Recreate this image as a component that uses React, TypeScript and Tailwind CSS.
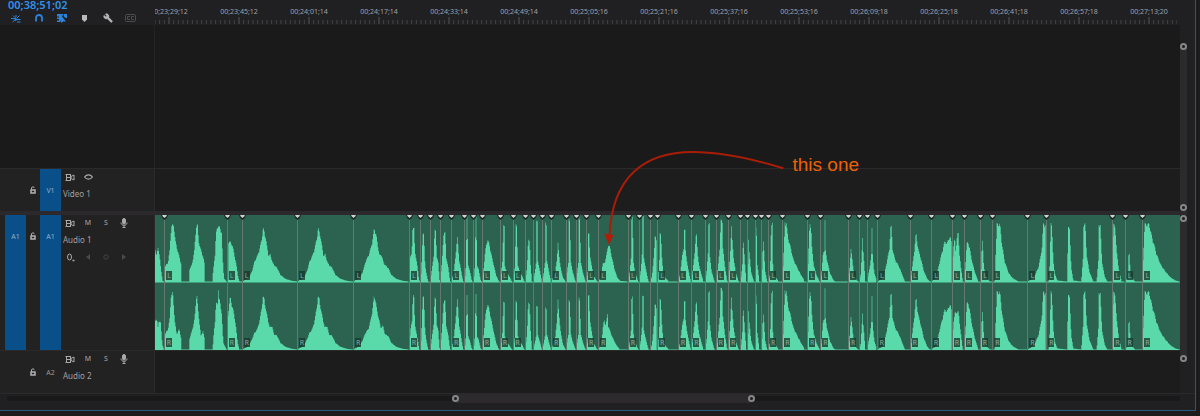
import type { ReactNode } from 'react';
import { Wrench } from 'lucide-react';

type Clip = {
    width: number;
    label?: boolean;
    left: number[];
    // either its own envelope, or the peak height the left one is scaled to
    right?: number | number[];
};

const CHANNEL_HEIGHT = 202;
const BASELINE = 199;

const SWELL_L = [0, 0, 20, 10, 30, 30, 38, 60, 46, 75, 54, 100, 60, 130, 64, 158, 70, 135, 74, 110, 80, 75, 85, 80, 92, 55, 100, 45, 106, 40, 115, 20, 130, 8, 150, 2, 166, 0];
const SWELL_R = [0, 0, 20, 10, 30, 30, 38, 50, 46, 60, 54, 90, 60, 130, 63, 153, 67, 150, 72, 115, 78, 90, 83, 65, 90, 70, 96, 45, 106, 40, 115, 20, 130, 8, 150, 2, 166, 0];
const SPIKE = [0, 0, 4, 20, 6, 60, 8, 195, 10, 195, 12, 50, 17, 35, 23, 5, 26, 0];
const PLUCK = [0, 0, 5, 25, 10, 60, 11, 175, 14, 175, 15, 60, 22, 25, 27, 0];

// envelopes are flat lists of x, height pairs
const CLIPS: Clip[] = [
    { width: 27, left: [0, 95, 5, 80, 9, 97, 13, 85, 18, 35, 23, 2, 27, 0], right: [0, 85, 6, 90, 9, 65, 12, 88, 17, 78, 22, 15, 27, 0] },
    {
        width: 188,
        label: true,
        left: [0, 0, 3, 45, 12, 55, 17, 90, 22, 165, 30, 165, 34, 120, 40, 95, 48, 65, 52, 50, 53, 0, 75, 0, 76, 35, 84, 50, 91, 90, 97, 165, 101, 165, 104, 120, 110, 95, 117, 75, 122, 50, 123, 0, 146, 0, 147, 25, 153, 80, 156, 140, 163, 168, 170, 150, 173, 148, 176, 70, 180, 10, 188, 0],
        right: [0, 0, 3, 45, 12, 60, 17, 90, 21, 160, 26, 168, 30, 120, 33, 80, 38, 45, 46, 60, 51, 35, 52, 0, 75, 0, 76, 30, 84, 55, 92, 90, 98, 170, 102, 120, 107, 75, 111, 40, 117, 55, 121, 35, 122, 0, 146, 0, 148, 30, 153, 85, 156, 135, 161, 135, 163, 182, 165, 150, 168, 140, 173, 110, 178, 20, 188, 0],
    },
    { width: 45, label: true, left: [0, 0, 3, 5, 4, 120, 10, 115, 16, 108, 22, 80, 28, 50, 34, 10, 38, 0], right: [0, 0, 3, 100, 6, 130, 10, 155, 14, 135, 20, 110, 26, 75, 32, 20, 37, 0] },
    { width: 166, label: true, left: SWELL_L, right: SWELL_R },
    { width: 169, label: true, left: SWELL_L, right: SWELL_R },
    { width: 167, label: true, left: SWELL_L, right: SWELL_R },
    { width: 34, label: true, left: [0, 0, 3, 70, 8, 80, 11, 158, 15, 155, 18, 90, 22, 65, 26, 40, 30, 5, 34, 0], right: [0, 0, 4, 55, 9, 85, 12, 165, 15, 150, 18, 75, 24, 40, 30, 5] },
    { width: 29, left: [0, 0, 4, 30, 8, 140, 12, 138, 14, 70, 18, 30, 24, 3], right: 155 },
    { width: 31, left: [0, 0, 5, 30, 11, 75, 14, 150, 18, 148, 20, 75, 25, 55, 29, 5] },
    { width: 33, left: [0, 0, 6, 60, 12, 150, 16, 148, 18, 70, 24, 50, 30, 3] },
    { width: 39, label: true, left: [0, 0, 8, 25, 13, 70, 17, 110, 19, 128, 22, 100, 25, 60, 30, 35, 36, 3], right: 145 },
    { width: 26, left: SPIKE, right: 160 },
    { width: 27, left: SPIKE, right: 160 },
    { width: 54, label: true, left: [0, 0, 5, 40, 10, 90, 16, 125, 22, 110, 28, 80, 35, 50, 42, 20, 50, 2], right: 135 },
    { width: 38, label: true, left: [0, 0, 4, 30, 8, 70, 10, 165, 13, 160, 15, 45, 20, 30, 28, 15, 36, 0], right: 140 },
    { width: 36, label: true, left: [0, 0, 5, 40, 9, 165, 12, 160, 14, 50, 20, 30, 28, 15, 34, 0], right: 140 },
    { width: 24, left: [0, 0, 6, 40, 10, 125, 14, 125, 16, 60, 20, 10], right: 140 },
    { width: 29, left: PLUCK, right: 125 },
    { width: 27, left: PLUCK, right: 125 },
    { width: 44, label: true, left: [0, 0, 12, 20, 18, 70, 21, 112, 24, 80, 30, 35, 36, 12, 44, 0], right: 145 },
    { width: 31, left: [0, 0, 4, 35, 8, 60, 9, 190, 12, 180, 14, 60, 20, 30, 28, 2], right: 150 },
    { width: 30, left: [0, 0, 4, 35, 8, 60, 9, 190, 12, 180, 14, 60, 20, 30, 28, 2], right: 150 },
    { width: 36, label: true, left: [0, 0, 5, 30, 7, 140, 9, 138, 12, 80, 18, 40, 24, 15, 34, 0], right: 158 },
    {
        width: 89,
        label: true,
        left: [0, 0, 8, 10, 14, 52, 20, 55, 26, 80, 31, 110, 36, 100, 42, 70, 50, 35, 58, 12, 66, 2, 89, 0],
        right: [0, 0, 10, 15, 16, 75, 20, 88, 22, 70, 26, 85, 29, 105, 31, 70, 36, 55, 44, 35, 54, 15, 64, 2],
    },
    { width: 34, label: true, left: [0, 0, 5, 25, 10, 80, 11, 190, 14, 190, 16, 60, 22, 25, 30, 3], right: 155 },
    { width: 32, left: [0, 0, 5, 30, 9, 80, 10, 190, 13, 190, 15, 70, 20, 40, 28, 3], right: 155 },
    { width: 22, left: [0, 0, 6, 15, 12, 80, 15, 130, 18, 135, 20, 120, 21, 0] },
    { width: 62, label: true, left: [0, 0, 4, 10, 8, 80, 9, 148, 12, 140, 14, 80, 18, 35, 24, 12, 34, 2], right: 155 },
    { width: 41, label: true, left: [0, 0, 6, 20, 12, 70, 17, 100, 18, 155, 21, 150, 23, 90, 30, 40, 38, 3], right: 145 },
    { width: 42, label: true, left: [0, 0, 6, 40, 12, 90, 14, 138, 17, 138, 20, 80, 26, 40, 36, 5] },
    { width: 31, left: [0, 0, 5, 30, 9, 85, 10, 175, 13, 170, 15, 70, 20, 30, 28, 2] },
    { width: 37, label: true, left: [0, 0, 6, 40, 12, 110, 14, 178, 19, 178, 21, 100, 26, 50, 33, 5] },
    { width: 35, label: true, left: [0, 0, 4, 40, 9, 130, 11, 160, 13, 120, 18, 60, 24, 25, 32, 0], right: 150 },
    { width: 21, left: [0, 0, 4, 20, 8, 60, 10, 135, 12, 100, 15, 50, 19, 0] },
    { width: 26, left: [0, 0, 3, 50, 5, 125, 7, 90, 12, 30, 20, 3], right: 115 },
    { width: 17, left: [0, 0, 2, 60, 3, 158, 5, 140, 7, 50, 12, 10] },
    { width: 21, left: [0, 0, 4, 50, 6, 128, 9, 90, 13, 30, 18, 2], right: 112 },
    { width: 43, label: true, left: [0, 0, 6, 20, 10, 175, 13, 175, 15, 50, 18, 20, 30, 3] },
    { width: 74, label: true, left: [0, 0, 4, 60, 9, 175, 13, 172, 18, 130, 26, 100, 34, 65, 44, 45, 54, 25, 66, 5] },
    { width: 40, label: true, left: [0, 0, 4, 70, 8, 172, 12, 165, 15, 100, 20, 50, 28, 20, 38, 0] },
    { width: 83, label: true, left: [0, 0, 5, 30, 10, 90, 13, 90, 14, 178, 16, 178, 17, 90, 22, 60, 30, 25, 40, 5, 46, 0] },
    { width: 34, label: true, left: [0, 0, 5, 40, 9, 98, 11, 85, 15, 45, 20, 12, 30, 0] },
    { width: 24, left: [0, 0, 5, 20, 9, 90, 11, 130, 13, 90, 18, 15], right: 108 },
    { width: 28, left: [0, 0, 8, 40, 13, 80, 15, 155, 17, 80, 22, 25, 27, 10] },
    { width: 99, label: true, left: [0, 0, 16, 8, 24, 30, 32, 70, 38, 100, 40, 160, 44, 160, 46, 100, 54, 65, 66, 45, 76, 20, 84, 0] },
    { width: 64, label: true, left: [0, 0, 8, 50, 14, 100, 18, 145, 21, 120, 26, 90, 32, 70, 42, 30, 52, 8, 60, 0], right: 155 },
    { width: 63, label: true, left: [0, 0, 16, 10, 24, 50, 34, 90, 42, 120, 48, 110, 52, 125, 58, 130, 62, 115, 63, 0] },
    {
        width: 36,
        label: true,
        left: [0, 0, 4, 100, 8, 130, 11, 90, 16, 140, 19, 140, 22, 90, 27, 40, 32, 3],
        right: [0, 0, 4, 80, 10, 110, 20, 110, 25, 60, 32, 3],
    },
    { width: 48, label: true, left: [0, 0, 5, 60, 8, 110, 12, 115, 16, 105, 22, 70, 32, 30, 42, 3], right: 138 },
    { width: 37, label: true, left: [0, 0, 4, 50, 6, 125, 8, 110, 12, 40, 20, 10, 30, 0], right: 115 },
    { width: 105, label: true, left: [0, 0, 8, 0, 10, 60, 15, 168, 24, 168, 30, 110, 38, 60, 50, 25, 62, 10, 80, 0] },
    { width: 57, label: true, left: [0, 0, 12, 5, 24, 20, 34, 40, 42, 80, 46, 110, 48, 168, 56, 168, 57, 0] },
    {
        width: 198,
        label: true,
        left: [0, 0, 8, 0, 12, 60, 14, 170, 18, 165, 22, 60, 26, 25, 34, 3, 64, 0, 66, 170, 71, 150, 76, 40, 82, 3, 106, 0, 112, 80, 113, 170, 118, 168, 122, 80, 130, 30, 142, 0, 152, 0, 157, 60, 159, 170, 163, 165, 168, 60, 176, 15, 184, 0],
    },
    { width: 37, label: true, left: [0, 0, 2, 100, 4, 168, 10, 160, 14, 90, 20, 40, 28, 3] },
    { width: 53, label: true, left: [0, 0, 8, 10, 12, 100, 14, 60, 18, 15, 30, 0] },
    { width: 113, label: true, left: [0, 0, 8, 168, 22, 168, 30, 130, 36, 110, 44, 80, 56, 50, 70, 30, 86, 12, 100, 3, 113, 0] },
];

const TIMES = [
    '00;23;29;12', '00;23;45;12', '00;24;01;14', '00;24;17;14', '00;24;33;14',
    '00;24;49;14', '00;25;05;16', '00;25;21;16', '00;25;37;16', '00;25;53;16',
    '00;26;09;18', '00;26;25;18', '00;26;41;18', '00;26;57;18', '00;27;13;20',
];

const heightAt = (points: number[], x: number) => {
    for (let i = 2; i < points.length; i += 2) {
        if (x <= points[i]) {
            const x0 = points[i - 2];
            const t = (x - x0) / (points[i] - x0);
            return points[i - 1] + t * (points[i + 1] - points[i - 1]);
        }
    }
    return 0;
};

const wavePath = (points: number[], width: number, scale: number) => {
    let d = `M0 ${CHANNEL_HEIGHT}`;
    for (let x = 0; x < width; x += 2) {
        const noise = Math.abs(Math.sin(x * 12.9 + width * 7.3));
        const h = heightAt(points, x + 1) * scale * (0.96 + noise * 0.08);
        d += `V${(BASELINE - h).toFixed(1)}H${Math.min(x + 2, width)}`;
    }
    return `${d}V${CHANNEL_HEIGHT}Z`;
};

function Channel({ clip, side }: { clip: Clip; side: 'L' | 'R' }) {
    let points = clip.left;
    let scale = 1;
    if (side === 'R' && Array.isArray(clip.right)) {
        points = clip.right;
    } else if (side === 'R' && clip.right) {
        scale = (clip.right as number) / Math.max(...clip.left.filter((_, i) => i % 2 === 1));
    }
    return (
        <div className="relative min-h-0 flex-1">
            <svg
                className="block h-full w-full"
                viewBox={`0 0 ${clip.width} ${CHANNEL_HEIGHT}`}
                preserveAspectRatio="none"
            >
                <path d={wavePath(points, clip.width, scale)} fill="#5ad9aa" />
            </svg>
            {clip.label && (
                <span className="absolute bottom-[3px] left-[2px] flex h-[9px] w-[6px] items-center justify-center bg-[#17392d]/80 text-[7px] leading-none text-[#93a89e]">
                    {side}
                </span>
            )}
        </div>
    );
}

function ClipView({ clip, first }: { clip: Clip; first: boolean }) {
    return (
        <div className="relative flex min-w-0 basis-0 flex-col" style={{ flexGrow: clip.width }}>
            <Channel clip={clip} side="L" />
            <Channel clip={clip} side="R" />
            {!first && (
                <>
                    <div className="absolute inset-y-0 left-0 w-px bg-[#63786e]" />
                    <svg className="absolute top-0 -left-[3px] h-[5px] w-[7px]" viewBox="0 0 7 5">
                        <path d="M0 0H7L6 3L3.500 5L1 3Z" fill="#1c2a25" />
                        <path d="M1.300 0H5.700V1L3.500 3L1.300 1Z" fill="#cfd3d0" />
                    </svg>
                </>
            )}
        </div>
    );
}

function IconButton({ label, children }: { label: string; children: ReactNode }) {
    return (
        <button aria-label={label} className="flex h-4 w-[18px] items-center justify-center text-[7px] text-[#a9a9a9]">
            {children}
        </button>
    );
}

function SyncIcon() {
    return (
        <svg width="10" height="9" viewBox="0 0 10 9" fill="none" stroke="currentColor">
            <path d="M.5 1.500H6M1.500 4.500H6M.5 7.500H6M1.500 1.500V7.500" />
            <path d="M5.500 1.500V7.500M6 3.500 9 2V7L6 5.500Z" />
        </svg>
    );
}

function EyeIcon() {
    return (
        <svg width="9" height="6" viewBox="0 0 9 6" fill="none" stroke="currentColor">
            <path d="M.6 3C2.500.2 6.500.2 8.400 3C6.500 5.800 2.500 5.800.6 3Z" strokeWidth="1.200" />
            <circle cx="4.500" cy="3" r=".7" fill="#222223" stroke="none" />
        </svg>
    );
}

function MicIcon() {
    return (
        <svg width="8" height="10" viewBox="0 0 8 10" fill="none" stroke="currentColor">
            <rect x="2.500" y=".5" width="3" height="5.500" rx="1.500" fill="currentColor" />
            <path d="M1 4.500C1 8.300 7 8.300 7 4.500M4 7.500V9.500M2.500 9.500H5.500" />
        </svg>
    );
}

function LockIcon() {
    return (
        <svg width="6" height="8" viewBox="0 0 6 8" fill="none" stroke="#b3b3b3">
            <path d="M1.500 3.500V1.800C1.500.6 4.300.6 4.300 1.800" />
            <path d="M1 4H5V7H1Z" strokeWidth="1.500" />
        </svg>
    );
}

function PatchButton({ name, on }: { name?: string; on?: boolean }) {
    return (
        <button
            aria-label={name ? undefined : 'Source patch'}
            className={`flex w-[21px] justify-center pt-4 text-[7px] leading-[12px] ${on ? 'bg-[#09508a] text-[#93aec6]' : 'text-[#9a9a9a]'}`}
        >
            {name}
        </button>
    );
}

type TrackHeaderProps = {
    id: string;
    name: string;
    source?: string;
    targeted?: boolean;
    audio?: boolean;
    keyframes?: boolean;
};

function TrackHeader({ id, name, source, targeted, audio, keyframes }: TrackHeaderProps) {
    return (
        <div className="flex w-[155px] shrink-0 border-r border-[#2b2b2c] bg-[#222223] pl-[5px]">
            <PatchButton name={source} on={!!source} />
            <button aria-label={`Lock ${name}`} className="flex w-[14px] justify-center pt-[17px]">
                <LockIcon />
            </button>
            <PatchButton name={id} on={targeted} />
            <div>
                <div className="flex">
                    <IconButton label="Toggle sync lock">
                        <SyncIcon />
                    </IconButton>
                    {audio ? (
                        <>
                            <IconButton label="Mute">M</IconButton>
                            <IconButton label="Solo">S</IconButton>
                            <IconButton label="Record">
                                <MicIcon />
                            </IconButton>
                        </>
                    ) : (
                        <IconButton label="Toggle track output">
                            <EyeIcon />
                        </IconButton>
                    )}
                </div>
                <div className="pl-[2px] text-[8px] leading-[18px] text-[#a0a0a0]">{name}</div>
                {keyframes && (
                    <div className="flex">
                        <IconButton label="Show keyframes">
                            <svg width="9" height="9" viewBox="0 0 9 9" fill="none" stroke="currentColor">
                                <ellipse cx="3.500" cy="4" rx="2" ry="3" />
                                <path d="M6.500 7.500H8.500" strokeWidth="1.500" />
                            </svg>
                        </IconButton>
                        <IconButton label="Previous keyframe">
                            <svg width="4" height="6" viewBox="0 0 4 6"><path d="M4 0V6L0 3Z" fill="#4a4a4a" /></svg>
                        </IconButton>
                        <IconButton label="Add keyframe">
                            <svg width="6" height="6" viewBox="0 0 6 6"><circle cx="3" cy="3" r="2.200" fill="none" stroke="#444" /></svg>
                        </IconButton>
                        <IconButton label="Next keyframe">
                            <svg width="4" height="6" viewBox="0 0 4 6"><path d="M0 0V6L4 3Z" fill="#4a4a4a" /></svg>
                        </IconButton>
                    </div>
                )}
            </div>
        </div>
    );
}

function Handle() {
    return <button aria-label="Zoom handle" className="block size-[7px] shrink-0 rounded-full border-2 border-[#868686] bg-[#1d1d1d]" />;
}

function VerticalZoom() {
    return (
        <div className="flex w-[7px] flex-1 flex-col justify-between rounded-full bg-[#2c2a2d]">
            <Handle />
            <Handle />
        </div>
    );
}

function Toolbar() {
    const tool = 'flex h-3 w-[23px] items-center justify-center';
    return (
        <div className="w-[155px] shrink-0 pl-1">
            <button className="block pl-1 text-[11px] leading-[9px] font-semibold text-[#3192ea]">00;38;51;02</button>
            <div className="flex pt-[3px] text-[#2b83dc]">
                <button aria-label="Insert as nest" className={tool}>
                    <svg width="10" height="9" viewBox="0 0 10 9" fill="none" stroke="currentColor">
                        <path d="M0 4.500H4M5 1V3M2 1.500 4 3.500M8.500 1.500 6 4M6 5.500H9.500M6 8H9.500M1.500 8 4 6" />
                        <path d="M4 3.500 6.500 5.500 4 7Z" fill="currentColor" strokeWidth=".5" />
                    </svg>
                </button>
                <button aria-label="Snap" className={tool}>
                    <svg width="8" height="8" viewBox="0 0 8 8" fill="none" stroke="currentColor" strokeWidth="1.800">
                        <path d="M1 7.500V4C1 0 7 0 7 4V7.500" />
                    </svg>
                </button>
                <button aria-label="Linked selection" className={tool}>
                    <svg width="10" height="9" viewBox="0 0 10 9" fill="currentColor">
                        <path d="M0 0H6.500L5 2.500 9 7.500H6L4.500 9 3.500 6V8H0V6.500H2V5H0V3.500H2V2.500H0Z" />
                        <path d="M7 0H10V4H8.500L6.500 2Z" />
                    </svg>
                </button>
                <button aria-label="Add marker" className={tool}>
                    <svg width="5" height="7" viewBox="0 0 5 7"><path d="M0 0H5V4.500L2.500 7L0 4.500Z" fill="#b9b9b9" /></svg>
                </button>
                <button aria-label="Timeline settings" className={tool}>
                    <Wrench className="size-[10px] -scale-x-100 text-[#b9b9b9]" fill="currentColor" strokeWidth={2} />
                </button>
                <button aria-label="Captions" className={tool}>
                    <svg width="11" height="8" viewBox="0 0 11 8" fill="none" stroke="#4c4c4e">
                        <rect x=".5" y=".5" width="10" height="7" rx="1" />
                        <path d="M5 2.500H2.500V5.500H5M9 2.500H6.500V5.500H9" />
                    </svg>
                </button>
            </div>
        </div>
    );
}

function Ruler() {
    const ticks = Array.from({ length: TIMES.length * 15 }, (_, i) => i);
    return (
        <div className="mr-[3px] min-w-0 flex-1 overflow-hidden">
            <div className="-mr-[7px] -ml-[21px] pt-[7px]">
                <div className="flex">
                    {TIMES.map((time) => (
                        <span key={time} className="min-w-0 flex-1 text-center text-[7px] leading-[9px] text-[#a2a2a4]">
                            {time}
                        </span>
                    ))}
                </div>
                <svg className="block h-[9px] w-full" viewBox={`0 0 ${ticks.length * 10} 9`} preserveAspectRatio="none">
                    {ticks.map((i) => (
                        <path
                            key={i}
                            d={`M${i * 10 + 5} ${i % 15 === 7 ? 1 : 4}V8`}
                            stroke={i % 15 === 7 ? '#555557' : '#444446'}
                            vectorEffect="non-scaling-stroke"
                        />
                    ))}
                </svg>
            </div>
        </div>
    );
}

function Annotation() {
    return (
        <div className="pointer-events-none absolute top-[120px] left-1/2 flex pl-[2px]">
            <svg width="190" height="104" viewBox="600 145 190 104" fill="none">
                <path d="M783.300 168.300C756 160 722 152 693 152C645 152 612 176 609.500 236" stroke="#a91d08" strokeWidth="2" />
                <path d="M604.300 233.500L613.700 235L608.700 244.500Z" fill="#b31d08" />
            </svg>
            <span className="pt-[9px] pl-[3px] font-['Liberation_Sans',Arial,sans-serif] text-[19px] leading-[22px] text-[#ee6204]">this one</span>
        </div>
    );
}

export default function App() {
    return (
        <div className="min-h-screen bg-[#1b1b1c] pr-1 font-['Noto_Sans',sans-serif]">
            <div className="border-r border-b border-[#27597f] bg-[#201f22]">
                <header className="flex h-[25px] pr-[15px]">
                    <Toolbar />
                    <Ruler />
                </header>

                <div className="relative pr-2">
                    <Annotation />
                    <section className="flex">
                        <div className="min-w-0 flex-1">
                            <div className="flex h-[143px] bg-[#1a1a1a]">
                                <div className="w-[155px] border-r border-[#232323]" />
                            </div>
                            <div className="flex h-[43px] border-t border-[#2a2a2a] bg-[#1d1d1d]">
                                <TrackHeader id="V1" name="Video 1" targeted />
                            </div>
                        </div>
                        <div className="flex flex-col pt-[18px]">
                            <VerticalZoom />
                        </div>
                    </section>

                    <div className="h-1 bg-[#2b292b]" />

                    <section className="flex">
                        <div className="min-w-0 flex-1">
                            <div className="flex h-[135px]">
                                <TrackHeader id="A1" name="Audio 1" source="A1" targeted audio keyframes />
                                <div className="flex min-w-0 flex-1 bg-[#2b6350]">
                                    {CLIPS.map((clip, i) => (
                                        <ClipView key={i} clip={clip} first={i === 0} />
                                    ))}
                                </div>
                            </div>
                            <div className="flex h-[43px] border-t border-[#2a2a2a] bg-[#1c1c1c]">
                                <TrackHeader id="A2" name="Audio 2" audio />
                            </div>
                        </div>
                        <div className="flex flex-col pb-[31px]">
                            <VerticalZoom />
                        </div>
                    </section>
                </div>

                <footer className="flex items-center border-t border-[#29292a] pr-[15px] pb-[7px] pl-[7px]">
                    <div className="h-[5px] grow-[445] basis-0 bg-[#19191a]" />
                    <div className="flex h-[9px] grow-[303] basis-0 items-center justify-between rounded-full bg-[#2c2a2d]">
                        <Handle />
                        <Handle />
                    </div>
                    <div className="h-[5px] grow-[425] basis-0 bg-[#19191a]" />
                </footer>
            </div>
        </div>
    );
}
